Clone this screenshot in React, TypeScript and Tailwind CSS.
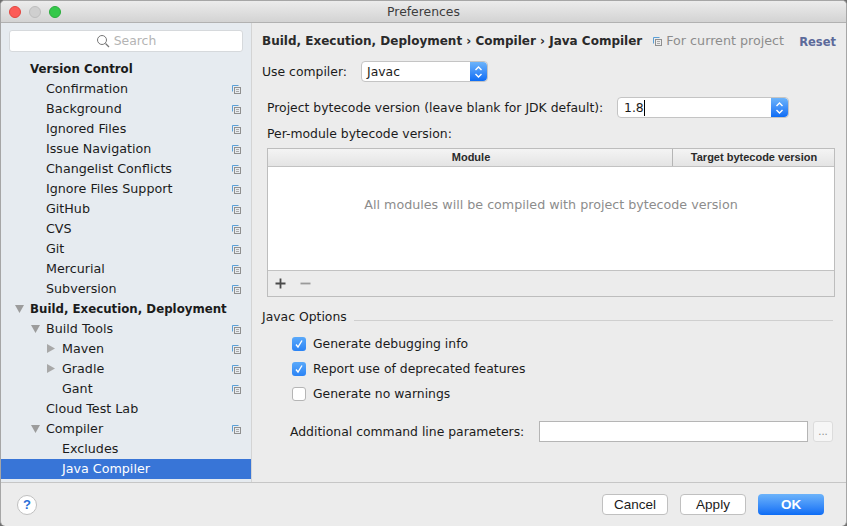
const font = "font-['DejaVu_Sans',sans-serif]";

const ProjectIcon = ({ className = "" }: { className?: string }) => (
  <svg width="9" height="9" viewBox="0 0 9 9" className={className}>
    <path d="M0.5 6.5V0.5H6.5" fill="none" stroke="#5a9fd6" strokeWidth="1" />
    <rect x="2.5" y="2.5" width="6" height="6" fill="none" stroke="#8f8f8f" strokeWidth="1" />
    <path d="M4 4.5H7M4 6.5H7" stroke="#a8a8a8" strokeWidth="1" />
  </svg>
);

const TreeRow = ({
  label,
  indent,
  bold,
  arrow,
  copy,
  selected,
}: {
  label: string;
  indent: string;
  bold?: boolean;
  arrow?: "down" | "right";
  copy?: boolean;
  selected?: boolean;
}) => (
  <div className={`flex items-center h-5 pr-[10px] ${indent} ${selected ? "bg-[#3875d7] text-white" : "text-[#1b1b1b]"}`}>
    <span className="w-0 relative">
      {arrow === "down" && (
        <svg width="9" height="8" viewBox="0 0 9 8" className="absolute -left-[15px] -top-[4px]">
          <path d="M0 0H9L4.5 8Z" fill="#9c9c9c" />
        </svg>
      )}
      {arrow === "right" && (
        <svg width="8" height="9" viewBox="0 0 8 9" className="absolute -left-[15px] -top-[5px]">
          <path d="M0 0V9L8 4.5Z" fill="#a8a8a8" />
        </svg>
      )}
    </span>
    <span className={`flex-1 whitespace-nowrap ${bold ? "font-bold text-[11.8px] pt-[2px]" : "text-[12.7px]"}`}>{label}</span>
    {copy && <ProjectIcon />}
  </div>
);

const Stepper = () => (
  <div className="w-[17px] self-stretch rounded-r-[4px] bg-gradient-to-b from-[#6cb3fa] to-[#0a6cf5] flex items-center justify-center">
    <svg width="9" height="14" viewBox="0 0 9 14">
      <path d="M1.5 5L4.5 2L7.5 5M1.5 9L4.5 12L7.5 9" fill="none" stroke="#fff" strokeWidth="1.4" />
    </svg>
  </div>
);

const Check = ({ label, checked }: { label: string; checked?: boolean }) => (
  <div className="flex items-center h-[25px] gap-[7px]">
    {checked ? (
      <div className="w-[14px] h-[14px] mb-[2px] rounded-[3px] bg-gradient-to-b from-[#5aa9fa] to-[#2a83f5] flex items-center justify-center">
        <svg width="10" height="10" viewBox="0 0 10 10">
          <path d="M2 5.5L4 8L8 1.5" fill="none" stroke="#fff" strokeWidth="1.4" />
        </svg>
      </div>
    ) : (
      <div className="w-[14px] h-[14px] mb-[2px] rounded-[3px] bg-white border border-[#b5b5b5]" />
    )}
    <span>{label}</span>
  </div>
);

const tree: { label: string; indent: string; bold?: boolean; arrow?: "down" | "right"; copy?: boolean; selected?: boolean }[] = [
  { label: "Version Control", indent: "pl-[29px]", bold: true },
  { label: "Confirmation", indent: "pl-[45px]", copy: true },
  { label: "Background", indent: "pl-[45px]", copy: true },
  { label: "Ignored Files", indent: "pl-[45px]", copy: true },
  { label: "Issue Navigation", indent: "pl-[45px]", copy: true },
  { label: "Changelist Conflicts", indent: "pl-[45px]", copy: true },
  { label: "Ignore Files Support", indent: "pl-[45px]", copy: true },
  { label: "GitHub", indent: "pl-[45px]", copy: true },
  { label: "CVS", indent: "pl-[45px]", copy: true },
  { label: "Git", indent: "pl-[45px]", copy: true },
  { label: "Mercurial", indent: "pl-[45px]", copy: true },
  { label: "Subversion", indent: "pl-[45px]", copy: true },
  { label: "Build, Execution, Deployment", indent: "pl-[29px]", bold: true, arrow: "down" },
  { label: "Build Tools", indent: "pl-[45px]", arrow: "down", copy: true },
  { label: "Maven", indent: "pl-[61px]", arrow: "right", copy: true },
  { label: "Gradle", indent: "pl-[61px]", arrow: "right", copy: true },
  { label: "Gant", indent: "pl-[61px]", copy: true },
  { label: "Cloud Test Lab", indent: "pl-[45px]" },
  { label: "Compiler", indent: "pl-[45px]", arrow: "down", copy: true },
  { label: "Excludes", indent: "pl-[61px]" },
  { label: "Java Compiler", indent: "pl-[61px]", selected: true },
];

export default function App() {
  return (
    <div className={`w-[847px] h-[526px] overflow-hidden bg-[#6f6f6f] text-[12.4px] leading-none text-[#1b1b1b] ${font}`}>
      <div className="h-full rounded-[5px] overflow-hidden bg-[#ececec] border-t border-x border-[#a6a6a6] flex flex-col">
        <div className="h-[22px] shrink-0 pt-px flex items-center relative bg-gradient-to-b from-[#ececec] to-[#d3d3d3] border-b border-[#b1b1b1]">
          <div className="flex gap-[8px] pl-[8px]">
            <span className="w-3 h-3 rounded-full bg-[#fc5b57] border border-[#e2463f]" />
            <span className="w-3 h-3 rounded-full bg-[#cfcfcf] border border-[#bdbdbd]" />
            <span className="w-3 h-3 rounded-full bg-[#34c84a] border border-[#2aac3c]" />
          </div>
          <div className="absolute inset-x-0 text-center text-[#3c3c3c] pt-px">Preferences</div>
        </div>

        <div className="flex-1 flex min-h-0 border-b border-[#c6c6c6]">
          <div className="w-[250px] shrink-0 bg-[#e6ebf0] flex flex-col">
            <div className="mx-2 mt-[7px] h-[22px] shrink-0 bg-white rounded-[3px] border border-[#d6d9dc] flex items-center justify-center gap-[4px] text-[#b4b4b4]">
              <svg width="14" height="14" viewBox="0 0 14 14">
                <circle cx="6" cy="6" r="4.5" fill="none" stroke="#777" strokeWidth="1" />
                <path d="M9.5 9.5L13 13" stroke="#777" strokeWidth="1.2" />
              </svg>
              <span className="pt-px">Search</span>
            </div>
            <div className="mt-[7px]">
              {tree.map((r) => (
                <TreeRow key={r.label} {...r} />
              ))}
            </div>
          </div>

          <div className="flex-1 border-l border-[#d4d4d4] flex flex-col pl-[10px] pr-[11px]">
            <div className="h-[18px] mt-[9px] flex items-center">
              <span className="font-bold text-[12px] text-[#2a2a2a] whitespace-nowrap">Build, Execution, Deployment › Compiler › Java Compiler</span>
              <ProjectIcon className="ml-[11px]" />
              <span className="ml-[4px] text-[12.7px] text-[#8c8c8c] whitespace-nowrap">For current project</span>
              <span className="ml-auto -mr-px pt-[4px] font-bold text-[11.5px] text-[#5c6a9a]">Reset</span>
            </div>

            <div className="flex items-center mt-[11px] h-[21px]">
              <span className="w-[99px] pt-[2px]">Use compiler:</span>
              <div className="w-[127px] h-[21px] flex items-center bg-white rounded-[4px] border border-[#c4c4c4]">
                <span className="flex-1 pl-[5px] pt-[2px]">Javac</span>
                <Stepper />
              </div>
            </div>

            <div className="flex items-center mt-[15px] h-[21px] pl-[5px]">
              <span className="w-[350px] whitespace-nowrap pt-[2px]">Project bytecode version (leave blank for JDK default):</span>
              <div className="w-[172px] h-[21px] flex items-center bg-white rounded-[4px] border border-[#c4c4c4]">
                <span className="pl-[6px] pt-[2px]">1.8</span>
                <span className="w-px h-[16px] bg-black" />
                <span className="flex-1" />
                <Stepper />
              </div>
            </div>

            <div className="ml-[5px] mt-[10px] h-[14px]">Per-module bytecode version:</div>

            <div className="ml-[5px] mt-[6px] w-[568px] h-[149px] shrink-0 border border-[#bdbdbd] flex flex-col">
              <div className="h-[18px] shrink-0 flex bg-gradient-to-b from-[#f4f4f4] to-[#e4e4e4] border-b border-[#c2c2c2] font-['Liberation_Sans',sans-serif] font-bold text-[11px] text-[#2a2a2a]">
                <div className="flex-1 flex items-center justify-center pl-[2px] border-r border-[#b5b5b5]">Module</div>
                <div className="w-[161px] flex items-center justify-center pl-px">Target bytecode version</div>
              </div>
              <div className="h-[104px] shrink-0 bg-white flex items-center justify-center pb-[26px] text-[12.7px] text-[#8c8c8c] border-b border-[#c2c2c2]">
                All modules will be compiled with project bytecode version
              </div>
              <div className="flex-1 flex items-center gap-[14px] pl-[7px]">
                <svg width="11" height="11" viewBox="0 0 11 11">
                  <path d="M5.5 0.5V10.5M0.5 5.5H10.5" stroke="#4a4a4a" strokeWidth="1.8" />
                </svg>
                <svg width="11" height="11" viewBox="0 0 11 11">
                  <path d="M0.5 5.5H10.5" stroke="#9a9a9a" strokeWidth="1.8" />
                </svg>
              </div>
            </div>

            <div className="flex items-center mt-[13px] h-[14px]">
              <span className="whitespace-nowrap">Javac Options</span>
              <span className="flex-1 h-px bg-[#cfcfcf] ml-[7px] mr-[2px] mt-[6px]" />
            </div>

            <div className="ml-[30px] mt-[8px] flex flex-col">
              <Check label="Generate debugging info" checked />
              <Check label="Report use of deprecated features" checked />
              <Check label="Generate no warnings" />
            </div>

            <div className="flex items-center mt-[14px] h-[21px] pl-[28px]">
              <span className="w-[249px] whitespace-nowrap pt-[2px]">Additional command line parameters:</span>
              <div className="w-[269px] h-[21px] bg-white border border-[#b5b5b5]" />
              <div className="ml-[5px] w-[20px] h-[21px] bg-[#f6f6f6] rounded-[3px] border border-[#dcdcdc] text-[#8c8c8c] flex items-center justify-center text-[10px]">...</div>
            </div>
          </div>
        </div>

        <div className="h-[43px] shrink-0 flex items-center pl-[16px] pr-[22px] font-['Liberation_Sans',sans-serif] text-[13.5px] text-[#1b1b1b]">
          <div className="w-5 h-5 rounded-full bg-white border border-[#c0c0c0] flex items-center justify-center text-[#2a6fd8] font-bold text-[13px]">?</div>
          <div className="ml-auto w-[66px] h-[21px] bg-white rounded-[4px] border border-[#c0c0c0] flex items-center justify-center">Cancel</div>
          <div className="ml-[12px] w-[66px] h-[21px] bg-white rounded-[4px] border border-[#c0c0c0] flex items-center justify-center">Apply</div>
          <div className="ml-[12px] w-[66px] h-[21px] rounded-[4px] bg-gradient-to-b from-[#6cb3fa] to-[#0a6cf5] text-white font-bold flex items-center justify-center">OK</div>
        </div>
      </div>
    </div>
  );
}
